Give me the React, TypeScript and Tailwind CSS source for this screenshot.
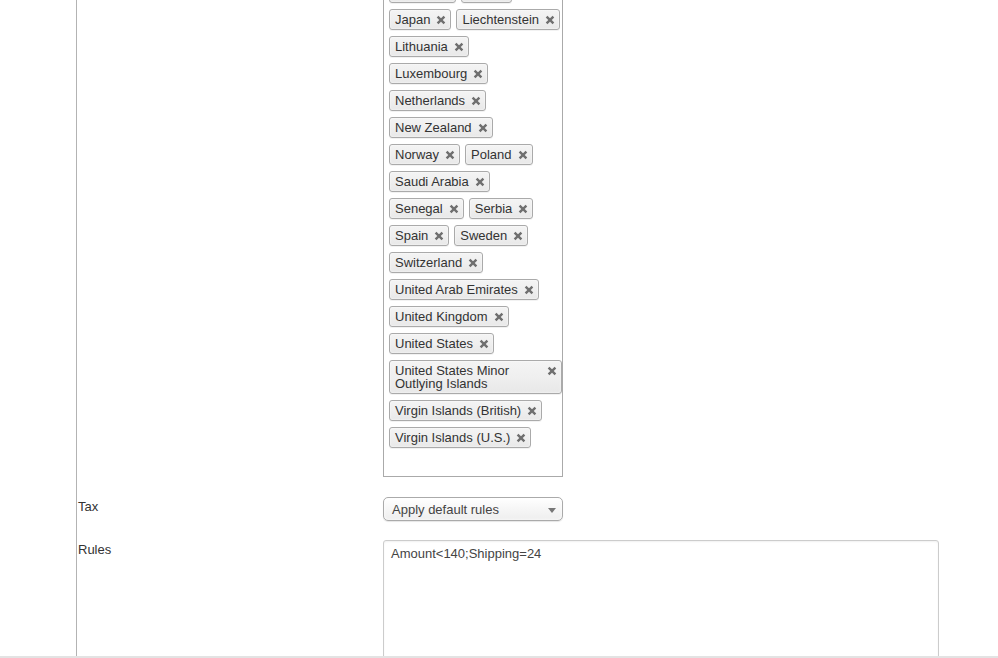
import React from "react";

const rows: string[][] = [
  ["Ireland", "Italy"],
  ["Japan", "Liechtenstein"],
  ["Lithuania"],
  ["Luxembourg"],
  ["Netherlands"],
  ["New Zealand"],
  ["Norway", "Poland"],
  ["Saudi Arabia"],
  ["Senegal", "Serbia"],
  ["Spain", "Sweden"],
  ["Switzerland"],
  ["United Arab Emirates"],
  ["United Kingdom"],
  ["United States"],
  ["United States Minor Outlying Islands"],
  ["Virgin Islands (British)"],
  ["Virgin Islands (U.S.)"],
];

const Choice = ({ label, wide }: { label: string; wide?: boolean }) => (
  <div
    className={`relative rounded-[3px] border border-[#aaa] bg-linear-to-b from-[#f4f4f4] via-[#efefef] to-[#e8e8e8] py-[3px] pl-[5px] pr-[20px] leading-[13px] text-[#333] shadow-[inset_0_0_2px_white,0_1px_0_rgba(0,0,0,0.05)] ${
      wide ? "flex-1" : "whitespace-nowrap"
    }`}
  >
    {label}
    <span className="absolute right-[3px] top-[4px] h-[12px] w-[12px]">
      <svg width="12" height="12" viewBox="0 0 12 12">
        <path d="M2.6 2.6 L9.4 9.4 M9.4 2.6 L2.6 9.4" stroke="#6f6f6f" strokeWidth="2.4" fill="none" />
      </svg>
    </span>
  </div>
);

export default function App() {
  return (
    <div className="h-[658px] w-[998px] overflow-hidden bg-white font-['Liberation_Sans',Arial,sans-serif] text-[13px] text-[#333]">
      <div className="flex h-[656px] overflow-hidden">
        <div className="w-[76px] shrink-0" />
        <div className="flex-1 border-l border-[#b3b3b3]">
          {/* countries */}
          <div className="flex">
            <div className="w-[306px] shrink-0" />
            <div className="-mt-[22px] w-[180px] border border-[#aaa] bg-white pb-[28px] pl-[5px] pt-[3px]">
              <div className="flex flex-col gap-[6px]">
                {rows.map((r, i) => (
                  <div key={i} className="flex gap-[5px]">
                    {r.map((c) => (
                      <Choice key={c} label={c} wide={c.length > 30} />
                    ))}
                  </div>
                ))}
              </div>
            </div>
          </div>

          {/* tax */}
          <div className="mt-[20px] flex">
            <div className="w-[306px] shrink-0 pl-[1px] pt-[1px] leading-[18px]">Tax</div>
            <div className="relative h-[24px] w-[180px] rounded-[5px] border border-[#aaa] bg-linear-to-b from-white via-[#f6f6f6] to-[#eeeeee] pl-[8px] pt-[1px] leading-[22px] text-[#444] shadow-[inset_0_0_3px_white,0_1px_1px_rgba(0,0,0,0.1)]">
              Apply default rules
              <svg className="absolute right-[6px] top-[10px]" width="8" height="5" viewBox="0 0 8 5">
                <path d="M0 0 L8 0 L4 5 Z" fill="#777" />
              </svg>
            </div>
          </div>

          {/* rules */}
          <div className="mt-[19px] flex">
            <div className="w-[306px] shrink-0 pl-[1px] pt-[1px] leading-[18px]">Rules</div>
            <textarea
              readOnly
              defaultValue="Amount<140;Shipping=24"
              className="h-[160px] w-[556px] resize-none rounded-[3px] border border-[#ccc] px-[7px] pt-[4px] leading-[18px] text-[#444] shadow-[inset_0_1px_2px_rgba(0,0,0,0.06)] outline-none"
            />
          </div>
        </div>
      </div>
      <div className="h-[2px] bg-[#e3e3e3]" />
    </div>
  );
}
